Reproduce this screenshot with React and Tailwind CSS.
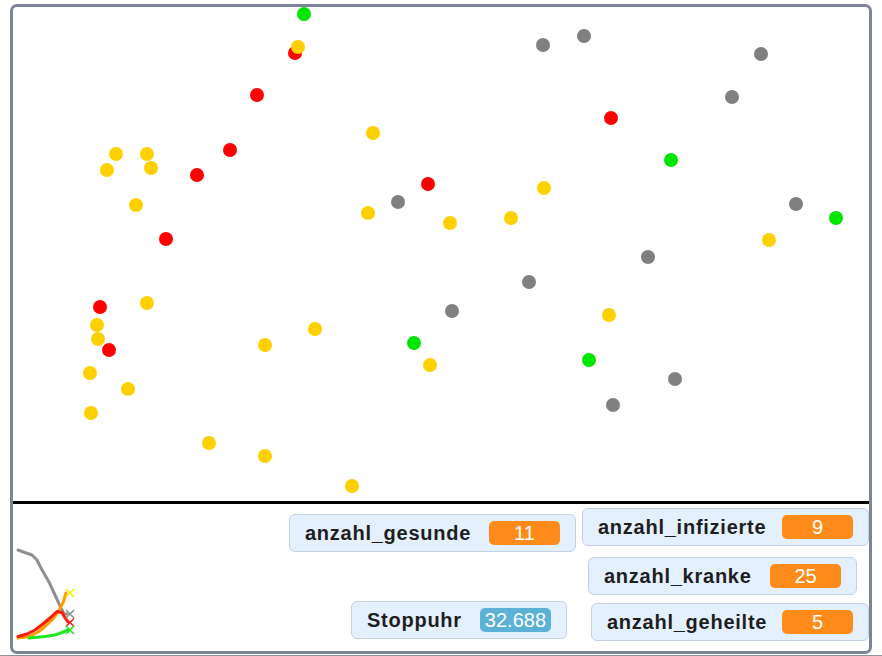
import React from 'react';

// Stage sprites, page coordinates (center x, y)
const RED = [[295, 53], [257, 95], [230, 150], [197, 175], [166, 239], [100, 307], [109, 350], [428, 184], [611, 118]];
const GRAY = [[543, 45], [584, 36], [761, 54], [732, 97], [398, 202], [796, 204], [648, 257], [529, 282], [452, 311], [675, 379], [613, 405]];
const GREEN = [[304, 14], [671, 160], [836, 218], [414, 343], [589, 360]];
const YELLOW = [
  [298, 47], [116, 154], [147, 154], [107, 170], [151, 168], [373, 133], [136, 205], [544, 188],
  [368, 213], [450, 223], [511, 218], [769, 240], [147, 303], [97, 325], [98, 339], [315, 329],
  [265, 345], [609, 315], [90, 373], [128, 389], [91, 413], [430, 365], [209, 443], [265, 456], [352, 486],
];

const MONITORS = [
  { label: 'anzahl_gesunde', value: '11', left: 276, top: 507, width: 287, color: 'orange' },
  { label: 'anzahl_infizierte', value: '9', left: 569, top: 501, width: 287, color: 'orange' },
  { label: 'anzahl_kranke', value: '25', left: 575, top: 550, width: 269, color: 'orange' },
  { label: 'anzahl_geheilte', value: '5', left: 578, top: 596, width: 278, color: 'orange' },
  { label: 'Stoppuhr', value: '32.688', left: 338, top: 594, width: 216, color: 'blue' },
];

const pts = (arr) => arr.map((p) => p.join(',')).join(' ');

const Cross = ({ x, y, color }) => (
  <path d={`M${x - 4} ${y - 4} L${x + 4} ${y + 4} M${x + 4} ${y - 4} L${x - 4} ${y + 4}`} stroke={color} strokeWidth="1.6" />
);

const Monitor = ({ label, value, left, top, width, color }) => (
  <div
    className="absolute flex items-center justify-between h-[38px] pl-[15px] pr-[15px] bg-[#e5f0ff] border-[1.5px] border-[#c4d0e0] rounded-[6px]"
    style={{ left, top, width }}
  >
    <span className="font-['Liberation_Sans',Arial,sans-serif] font-bold text-[20px] tracking-[0.75px] text-[#1e1e1e] leading-none">
      {label}
    </span>
    <span
      className={`flex items-center justify-center min-w-[71px] h-[24px] px-[5px] rounded-[5px] text-white text-[20px] leading-none font-['Liberation_Sans',Arial,sans-serif] ${color === 'blue' ? 'bg-[#5cb1d6]' : 'bg-[#ff8c1a]'}`}
    >
      {value}
    </span>
  </div>
);

export default function App() {
  return (
    <div className="w-[882px] h-[656px] bg-white overflow-hidden">
      <div className="relative ml-[10px] mt-[4px] w-[862px] h-[650px] border-[3px] border-[#7c8598] rounded-[7px] overflow-hidden bg-white">
        <svg className="absolute inset-0" width="856" height="644" viewBox="13 7 856 644">
          {/* pen line */}
          <rect x="13" y="501" width="856" height="3" fill="#000" />

          {/* sprites */}
          {RED.map(([x, y], i) => <circle key={'r' + i} cx={x} cy={y} r="7" fill="#ff0000" />)}
          {GRAY.map(([x, y], i) => <circle key={'g' + i} cx={x} cy={y} r="7" fill="#808080" />)}
          {GREEN.map(([x, y], i) => <circle key={'n' + i} cx={x} cy={y} r="7" fill="#00e600" />)}
          {YELLOW.map(([x, y], i) => <circle key={'y' + i} cx={x} cy={y} r="7" fill="#ffd000" />)}

          {/* small chart */}
          <g fill="none" strokeWidth="3" strokeLinejoin="round" strokeLinecap="round">
            <polyline
              points={pts([[18, 550], [22, 551.5], [32, 555], [37, 560], [42, 570], [49, 582], [55, 595], [60, 606], [64, 614], [67, 614]])}
              stroke="#8f8f8f"
            />
            <polyline
              points={pts([[18, 638], [29, 636.5], [39, 631.5], [45, 626.5], [52, 620], [58.5, 611.5], [63.5, 601.5], [66, 593]])}
              stroke="#ff9c00"
            />
            <polyline
              points={pts([[29, 638], [45, 636.5], [55, 635], [62, 632.5], [68, 630]])}
              stroke="#22e622"
            />
            <polyline
              points={pts([[18, 636.5], [27, 634], [35, 630], [43.5, 623.5], [50, 618], [57, 611.5], [62, 612.5], [65.5, 618.5], [68, 622]])}
              stroke="#ff1a00"
            />
          </g>
          <Cross x={70} y={593} color="#f5f000" />
          <Cross x={70} y={614} color="#8f8f8f" />
          <Cross x={70} y={622.5} color="#ff2020" />
          <Cross x={70} y={630} color="#22e622" />
        </svg>

        {MONITORS.map((m) => <Monitor key={m.label} {...m} />)}
      </div>
      <div className="mt-[1px] h-px bg-[#8c919b]" />
    </div>
  );
}
